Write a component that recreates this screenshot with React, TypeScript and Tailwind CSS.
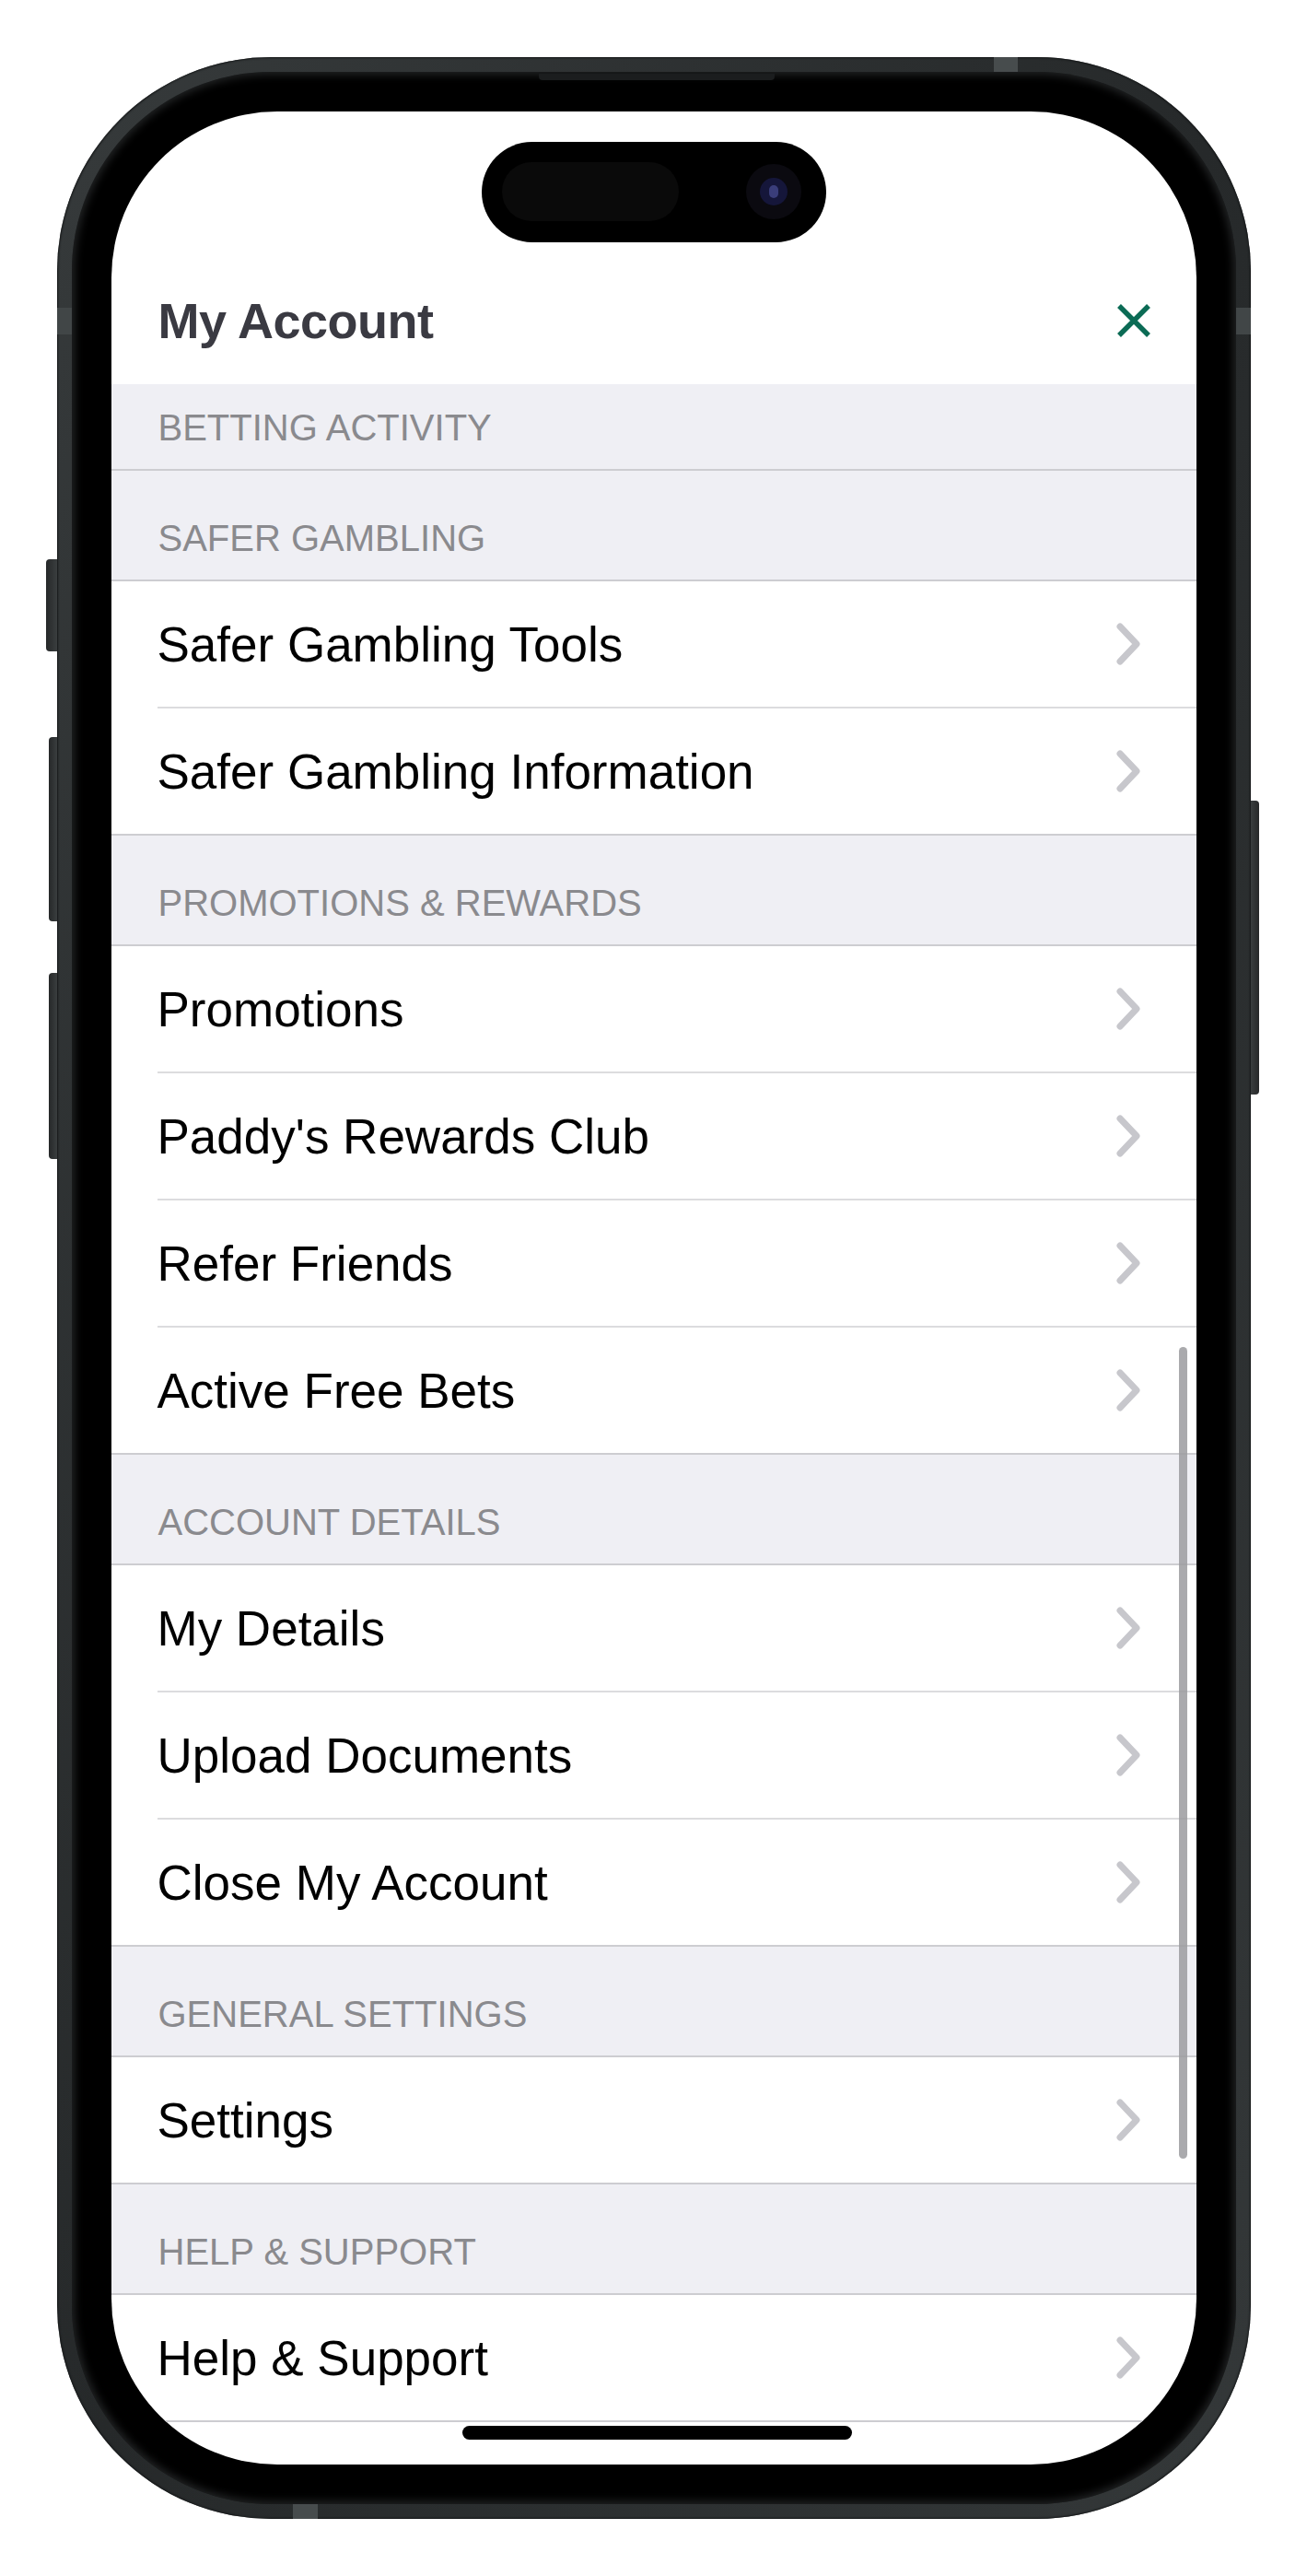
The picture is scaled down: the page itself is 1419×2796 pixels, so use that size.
import React from "react"

type Section = {
  title: string
  items: string[]
}

const sections: Section[] = [
  { title: "BETTING ACTIVITY", items: [] },
  { title: "SAFER GAMBLING", items: ["Safer Gambling Tools", "Safer Gambling Information"] },
  {
    title: "PROMOTIONS & REWARDS",
    items: ["Promotions", "Paddy's Rewards Club", "Refer Friends", "Active Free Bets"],
  },
  { title: "ACCOUNT DETAILS", items: ["My Details", "Upload Documents", "Close My Account"] },
  { title: "GENERAL SETTINGS", items: ["Settings"] },
  { title: "HELP & SUPPORT", items: ["Help & Support"] },
]

const Chevron = () => (
  <svg width="26" height="46" viewBox="0 0 26 46" fill="none">
    <path
      d="M4 4 L22 23 L4 42"
      stroke="#c7c7cc"
      strokeWidth="7"
      strokeLinecap="round"
      strokeLinejoin="round"
    />
  </svg>
)

const CloseIcon = () => (
  <svg width="40" height="40" viewBox="0 0 40 40" fill="none">
    <path d="M4 4 L36 36 M36 4 L4 36" stroke="#0b6b55" strokeWidth="5.5" />
  </svg>
)

const SectionHeader = ({ title, first }: { title: string; first: boolean }) => (
  <div
    className={`flex items-end border-b-2 border-[#cdcdd1] bg-[#efeff4] pl-[51px] pb-[25px] ${
      first ? "h-[94px]" : "h-[120px]"
    }`}
  >
    <span className="text-[40px] leading-none text-[#8a8a8e]">{title}</span>
  </div>
)

const Row = ({ label, last }: { label: string; last: boolean }) => (
  <div className={`flex h-[138px] pl-[50px] ${last ? "border-b-2 border-[#cdcdd1]" : ""}`}>
    <div
      className={`flex flex-1 items-center justify-between pr-[61px] ${
        last ? "" : "border-b-2 border-[#dcdcde]"
      }`}
    >
      <span className="text-[53px] leading-none text-black">{label}</span>
      <Chevron />
    </div>
  </div>
)

export default function App() {
  return (
    <div className="flex h-[2796px] w-full items-center justify-center bg-white font-['Liberation_Sans',Arial,sans-serif]">
      {/* Phone body */}
      <div className="relative h-[2672px] w-[1296px] rounded-[232px] bg-gradient-to-br from-[#363a3b] via-[#26292a] to-[#343839] p-[16px] shadow-[inset_0_0_2px_1px_#151718]">
        {/* side buttons */}
        <div className="absolute left-[-12px] top-[545px] h-[100px] w-[12px] rounded-l-[4px] bg-gradient-to-r from-[#262829] to-[#3a3e3f]" />
        <div className="absolute left-[-9px] top-[738px] h-[200px] w-[9px] rounded-l-[4px] bg-gradient-to-r from-[#262829] to-[#3a3e3f]" />
        <div className="absolute left-[-9px] top-[994px] h-[202px] w-[9px] rounded-l-[4px] bg-gradient-to-r from-[#262829] to-[#3a3e3f]" />
        <div className="absolute right-[-9px] top-[807px] h-[319px] w-[9px] rounded-r-[4px] bg-gradient-to-l from-[#262829] to-[#3a3e3f]" />

        {/* antenna bands */}
        <div className="absolute left-[1017px] top-0 h-[16px] w-[26px] bg-[#474c4d]" />
        <div className="absolute left-[256px] bottom-0 h-[16px] w-[27px] bg-[#474c4d]" />
        <div className="absolute left-0 top-[272px] h-[29px] w-[16px] bg-[#414647]" />
        <div className="absolute right-0 top-[272px] h-[29px] w-[16px] bg-[#414647]" />

        {/* bezel */}
        <div className="relative h-full w-full rounded-[216px] bg-black p-[43px] shadow-[inset_0_0_10px_3px_rgba(70,74,76,0.5)]">
          {/* earpiece */}
          <div className="absolute left-[507px] top-[2px] h-[7px] w-[256px] rounded-b-[4px] bg-[#1b1d1e]" />

          {/* screen */}
          <div className="relative flex h-full w-full flex-col overflow-hidden rounded-[180px] bg-white">
            {/* dynamic island */}
            <div className="absolute left-[402px] top-[33px] h-[109px] w-[374px] rounded-full bg-black">
              <div className="absolute left-[22px] top-[22px] h-[64px] w-[192px] rounded-full bg-[#0a0a0a]" />
              <div className="absolute left-[287px] top-[24px] flex h-[60px] w-[60px] items-center justify-center rounded-full bg-[#0b0a10]">
                <div className="flex h-[30px] w-[30px] items-center justify-center rounded-full bg-[#15163a]">
                  <div className="h-[14px] w-[10px] rounded-full bg-[#3a3d7a]" />
                </div>
              </div>
            </div>

            {/* title bar */}
            <div className="flex h-[296px] shrink-0 flex-col">
              <div className="h-[172px]" />
              <div className="flex h-[110px] items-center justify-between pl-[51px] pr-[48px]">
                <span className="text-[54px] font-bold leading-none tracking-[-0.5px] text-[#3a3a42]">
                  My Account
                </span>
                <CloseIcon />
              </div>
            </div>

            {/* list */}
            <div className="flex flex-col">
              {sections.map((section, si) => (
                <div key={section.title} className="flex flex-col">
                  <SectionHeader title={section.title} first={si === 0} />
                  {section.items.map((item, ii) => (
                    <Row key={item} label={item} last={ii === section.items.length - 1} />
                  ))}
                </div>
              ))}
            </div>

            {/* scroll indicator */}
            <div className="absolute right-[10px] top-[1341px] h-[881px] w-[9px] rounded-full bg-[#9b9b9f]/85" />

            {/* home indicator */}
            <div className="absolute bottom-[27px] left-[381px] h-[15px] w-[423px] rounded-full bg-black" />
          </div>
        </div>
      </div>
    </div>
  )
}
